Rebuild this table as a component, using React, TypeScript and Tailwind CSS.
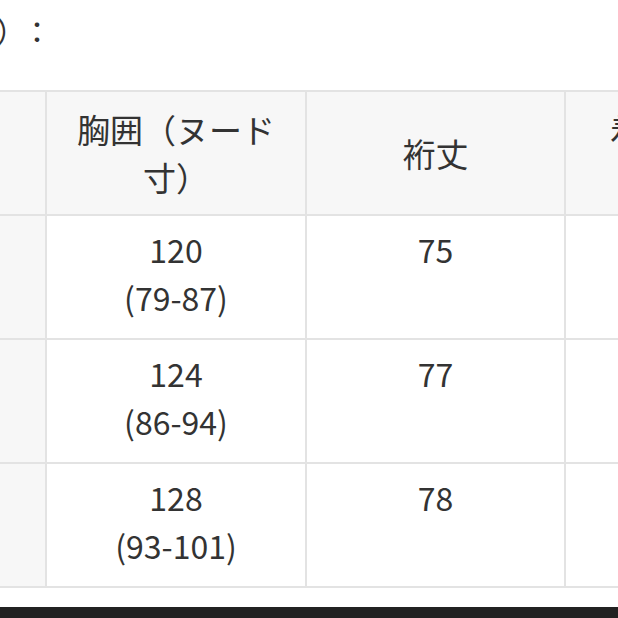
const rows = [
  { chest: "120", range: "(79-87)", length: "75" },
  { chest: "124", range: "(86-94)", length: "77" },
  { chest: "128", range: "(93-101)", length: "78" },
];

const cell = "border-2 border-[#e3e3e3] px-5 text-center";

export default function App() {
  return (
    <div
      className="w-[618px] h-[618px] overflow-hidden bg-white text-[#333] flex flex-col"
      style={{ fontFamily: '"Noto Sans CJK JP", "Noto Sans", sans-serif' }}
    >
      <div className="h-[90px] shrink-0 pt-[6px] text-[30px] leading-[48px] whitespace-nowrap flex">
        <span className="ml-[-4px]">）</span>
        <span className="ml-[-4px]">：</span>
      </div>

      <table className="table-fixed border-collapse w-[826px] ml-[-1px] shrink-0 text-[32px] leading-[48px]">
        <colgroup>
          <col className="w-[47px]" />
          <col className="w-[260px]" />
          <col className="w-[259px]" />
          <col className="w-[260px]" />
        </colgroup>
        <thead>
          <tr className="h-[124px] bg-[#f7f7f7] text-[33px]">
            <th className={`${cell} font-normal border-l-0`}></th>
            <th className={`${cell} font-normal`}>胸囲（ヌード寸）</th>
            <th className={`${cell} font-normal`}>裄丈</th>
            <th className={`${cell} font-normal text-left pl-[44px]`}>着丈（ヌード寸）</th>
          </tr>
        </thead>
        <tbody>
          {rows.map((r) => (
            <tr key={r.chest} className="h-[124px]">
              <td className={`${cell} bg-[#f7f7f7] border-l-0`}></td>
              <td className={`${cell} align-top pt-[9px]`}>
                {r.chest}
                <br />
                {r.range}
              </td>
              <td className={`${cell} align-top pt-[9px]`}>{r.length}</td>
              <td className={`${cell} align-top pt-[9px]`}></td>
            </tr>
          ))}
        </tbody>
      </table>

      <div className="flex-1" />
      <div className="h-[11px] shrink-0 bg-[#222]" />
    </div>
  );
}
